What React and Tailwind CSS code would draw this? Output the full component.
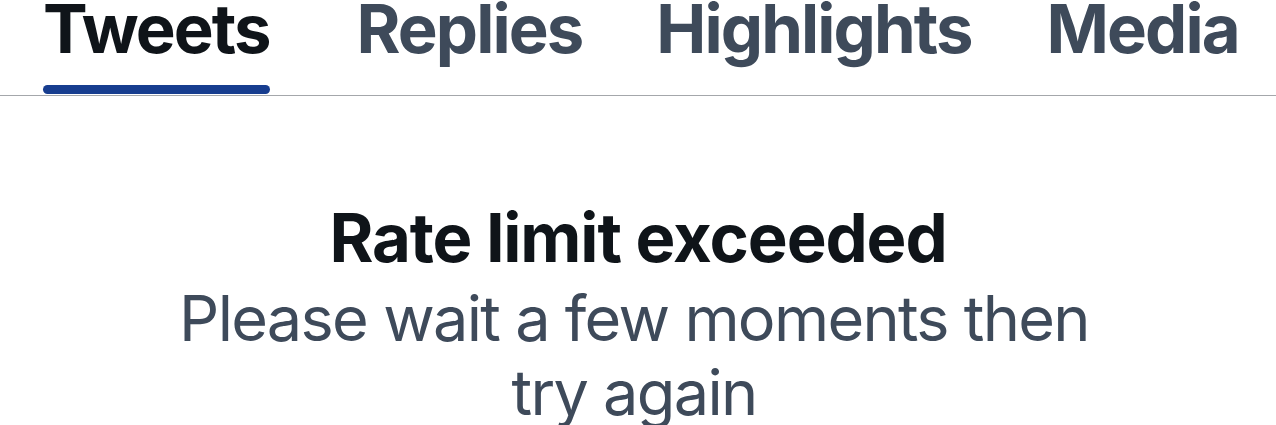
export default function App() {
  const tabs = [
    { label: "Tweets", active: true, cls: "ml-[43px]" },
    { label: "Replies", cls: "ml-[87px]" },
    { label: "Highlights", cls: "ml-[74px]" },
    { label: "Media", cls: "ml-[75px]" },
  ];
  return (
    <div
      className="w-[1276px] h-[425px] bg-white overflow-hidden"
      style={{ fontFamily: "Inter, 'Noto Sans', sans-serif" }}
    >
      <div className="flex h-[96px] border-b border-[#a4a7ab]">
        {tabs.map((t) => (
          <div key={t.label} className={`relative flex flex-col ${t.cls}`}>
            <span
              className={`text-[67px] leading-[57px] font-bold tracking-[-1.9px] whitespace-nowrap ${
                t.active ? "text-[#0f1419]" : "text-[#3e4a5a]"
              }`}
            >
              {t.label}
            </span>
            {t.active && (
              <div className="absolute left-0 right-0 bottom-[1px] h-[9px] rounded-full bg-[#173d8f]" />
            )}
          </div>
        ))}
      </div>
      <div className="flex flex-col items-center pt-[108px]">
        <div className="text-[67px] leading-[67px] font-bold tracking-[-1.1px] text-[#0f1419] whitespace-nowrap">
          Rate limit exceeded
        </div>
        <div className="mt-[10px] text-[63px] leading-[74px] tracking-[-1.7px] text-[#3e4a5a] text-center w-[1000px] -translate-x-[4px]">
          Please wait a few moments then
          <br />
          try again
        </div>
      </div>
    </div>
  );
}
